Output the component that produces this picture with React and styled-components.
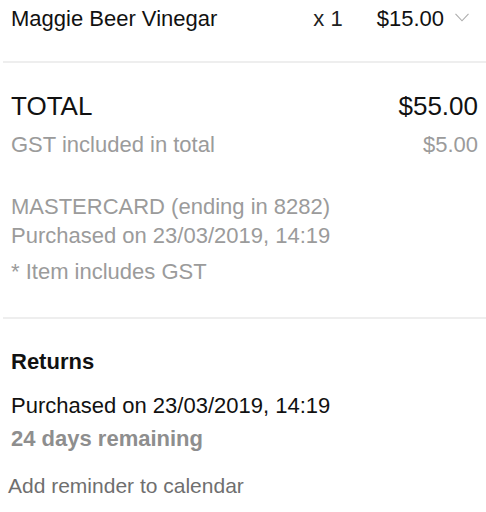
import React from 'react'
import styled, { createGlobalStyle } from 'styled-components'

const Global = createGlobalStyle`
  body {
    margin: 0;
    background: #fff;
    font-family: "Liberation Sans", Arial, sans-serif;
    color: #111;
  }
`

const Page = styled.div`
  width: 486px;
`

const ItemRow = styled.div`
  display: flex;
  align-items: center;
  padding: 0 17px 0 11px;
  height: 38px;
  font-size: 22px;
  line-height: 38px;
`

const ItemName = styled.div`
  flex: 1;
`

const Qty = styled.div`
  color: #222;
  margin-right: 34px;
`

const Price = styled.div`
  margin-right: 11px;
`

const ChevronIcon = styled.svg`
  margin-bottom: 3px;
`

const Divider = styled.div`
  height: 2px;
  background: #eeeeee;
  margin: ${p => p.$top}px 0 0 3px;
`

const Section = styled.div`
  padding: ${p => p.$pad};
`

const Line = styled.div`
  display: flex;
  justify-content: space-between;
  font-size: ${p => p.$size}px;
  line-height: ${p => p.$lh}px;
  font-weight: ${p => (p.$bold ? 700 : 400)};
  color: ${p => p.$color || '#111'};
  margin-top: ${p => p.$mt || 0}px;
  margin-left: ${p => p.$ml || 0}px;
`

const Chevron = () => (
  <ChevronIcon width="14" height="9" viewBox="0 0 14 9" fill="none">
    <path d="M0.5 0.8 L7 7.8 L13.5 0.8" stroke="#adadad" strokeWidth="1.1" />
  </ChevronIcon>
)

export default function App() {
  return (
    <Page>
      <Global />
      <ItemRow>
        <ItemName>Maggie Beer Vinegar</ItemName>
        <Qty>x 1</Qty>
        <Price>$15.00</Price>
        <Chevron />
      </ItemRow>
      <Divider $top={23} />

      <Section $pad="26px 8px 0 11px">
        <Line $size={26} $lh={34}>
          <span>TOTAL</span>
          <span>$55.00</span>
        </Line>
        <Line $size={22} $lh={30} $mt={7} $color="#9b9b9b">
          <span>GST included in total</span>
          <span>$5.00</span>
        </Line>
      </Section>

      <Section $pad="32px 11px 0 11px">
        <Line $size={22} $lh={29} $color="#9b9b9b">MASTERCARD (ending in 8282)</Line>
        <Line $size={22} $lh={29} $color="#9b9b9b">Purchased on 23/03/2019, 14:19</Line>
        <Line $size={22} $lh={29} $mt={7} $color="#9b9b9b">* Item includes GST</Line>
      </Section>
      <Divider $top={31} />

      <Section $pad="28px 11px 0 11px">
        <Line $size={22} $lh={30} $bold>Returns</Line>
        <Line $size={22} $lh={30} $mt={14}>Purchased on 23/03/2019, 14:19</Line>
        <Line $size={22} $lh={30} $mt={3} $bold $color="#8e8e8e">24 days remaining</Line>
        <Line $size={21} $lh={30} $mt={17} $ml={-3} $color="#6f6f6f">Add reminder to calendar</Line>
      </Section>
    </Page>
  )
}
